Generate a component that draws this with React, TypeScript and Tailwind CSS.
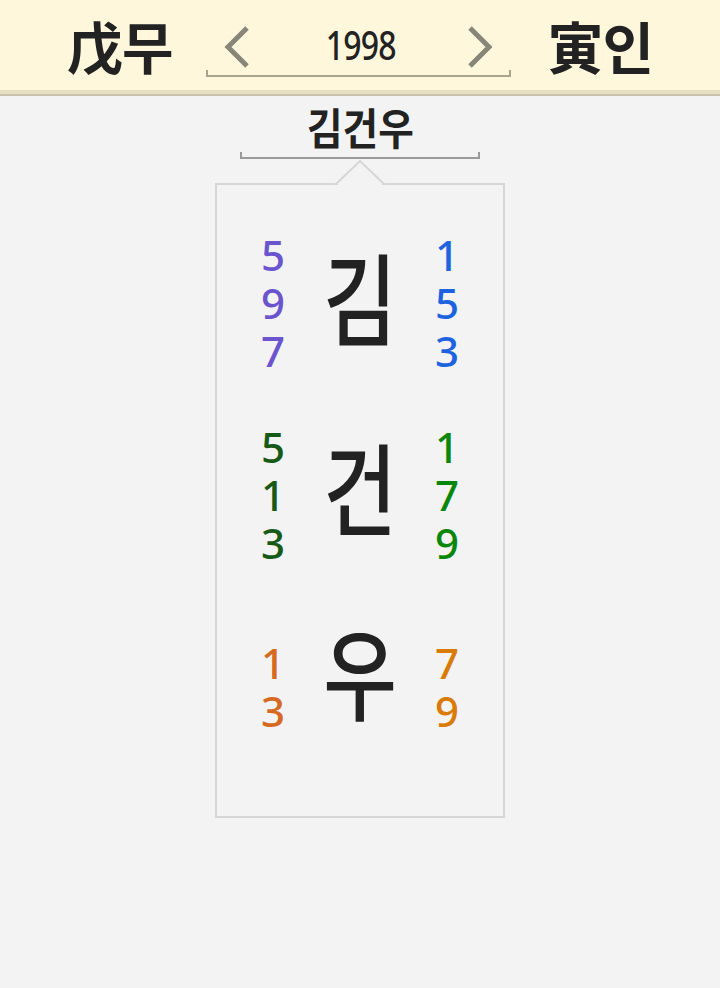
const KR = "font-['Noto_Sans_CJK_KR',sans-serif]"
const NUM = "font-['Noto_Sans','Noto_Sans_CJK_KR',sans-serif]"

type Row = {
  ch: string
  left: string[]
  right: string[]
  leftColor: string
  rightColor: string
  shift: string
}

const ROWS: Row[] = [
  { ch: '김', left: ['5', '9', '7'], right: ['1', '5', '3'], leftColor: 'text-[#6a55cf]', rightColor: 'text-[#1d63e0]', shift: '-mt-[16px]' },
  { ch: '건', left: ['5', '1', '3'], right: ['1', '7', '9'], leftColor: 'text-[#175a17]', rightColor: 'text-[#0a870a]', shift: '-mt-[20px]' },
  { ch: '우', left: ['1', '3'], right: ['7', '9'], leftColor: 'text-[#d66a22]', rightColor: 'text-[#d97b06]', shift: '-mt-[34px]' },
]

function Digits({ items, color }: { items: string[]; color: string }) {
  return (
    <div className={`w-[112px] flex flex-col items-center ${NUM} ${color} font-medium text-[42px] leading-[48px]`}>
      {items.map((d, i) => (
        <span key={i}>{d}</span>
      ))}
    </div>
  )
}

function Chevron({ dir }: { dir: 'l' | 'r' }) {
  return (
    <svg width="26" height="42" viewBox="0 0 26 42">
      <polyline
        points={dir === 'l' ? '23,2 4,21 23,40' : '3,2 22,21 3,40'}
        fill="none"
        stroke="#878779"
        strokeWidth="5"
      />
    </svg>
  )
}

export default function App() {
  return (
    <div className="min-h-screen bg-[#f3f3f3]">
      {/* header */}
      <div className="bg-[#fff7dc]">
        <div className="h-[90px] flex items-center justify-center">
          <span className={`${KR} font-bold text-[56px] text-[#222] mr-[33px] tracking-[-1px]`}>戊무</span>
          <div className="self-start mt-[26px] w-[305px] flex flex-col">
            <div className="h-[42px] flex items-center justify-between px-[18px]">
              <Chevron dir="l" />
              <span className={`${NUM} font-medium text-[40px] text-[#222] scale-x-[0.8] tracking-[-1px] ml-[6px] -mt-[4px]`}>1998</span>
              <Chevron dir="r" />
            </div>
            <div className="mt-[2px] h-[7px] border-b-2 border-x-2 border-[#a8a48f]" />
          </div>
          <span className={`${KR} font-bold text-[56px] text-[#222] ml-[37px] tracking-[-1px]`}>寅인</span>
        </div>
        <div className="h-[4px] bg-[#e6dfc1]" />
        <div className="h-[2px] bg-[#c9c1a9]" />
      </div>

      {/* name */}
      <div className="flex flex-col items-center">
        <div className={`${KR} font-bold text-[43px] leading-[52px] text-[#222] mt-[4px] scale-x-[0.9]`}>김건우</div>
        <div className="w-[240px] h-[7px] border-b-2 border-x-2 border-[#9a9a9a]" />

        {/* card */}
        <div className="relative mt-[24px] w-[290px] h-[635px] border-2 border-[#d6d6d6]">
          <svg
            className="absolute left-1/2 -translate-x-1/2 -top-[25px]"
            width="52"
            height="25"
            viewBox="0 0 52 25"
          >
            <polyline points="2,24 26,1 50,24" fill="#f3f3f3" stroke="#d6d6d6" strokeWidth="2" />
            <rect x="4" y="23" width="44" height="3" fill="#f3f3f3" />
          </svg>
          <div className="pt-[22px]">
            {ROWS.map((r) => (
              <div key={r.ch} className="h-[192px] flex items-center">
                <Digits items={r.left} color={r.leftColor} />
                <div className="w-[62px] flex justify-center">
                  <span
                    className={`${KR} font-medium text-[100px] text-[#222] leading-none whitespace-nowrap scale-x-[0.8] ${r.shift}`}
                  >
                    {r.ch}
                  </span>
                </div>
                <Digits items={r.right} color={r.rightColor} />
              </div>
            ))}
          </div>
        </div>
      </div>
    </div>
  )
}
